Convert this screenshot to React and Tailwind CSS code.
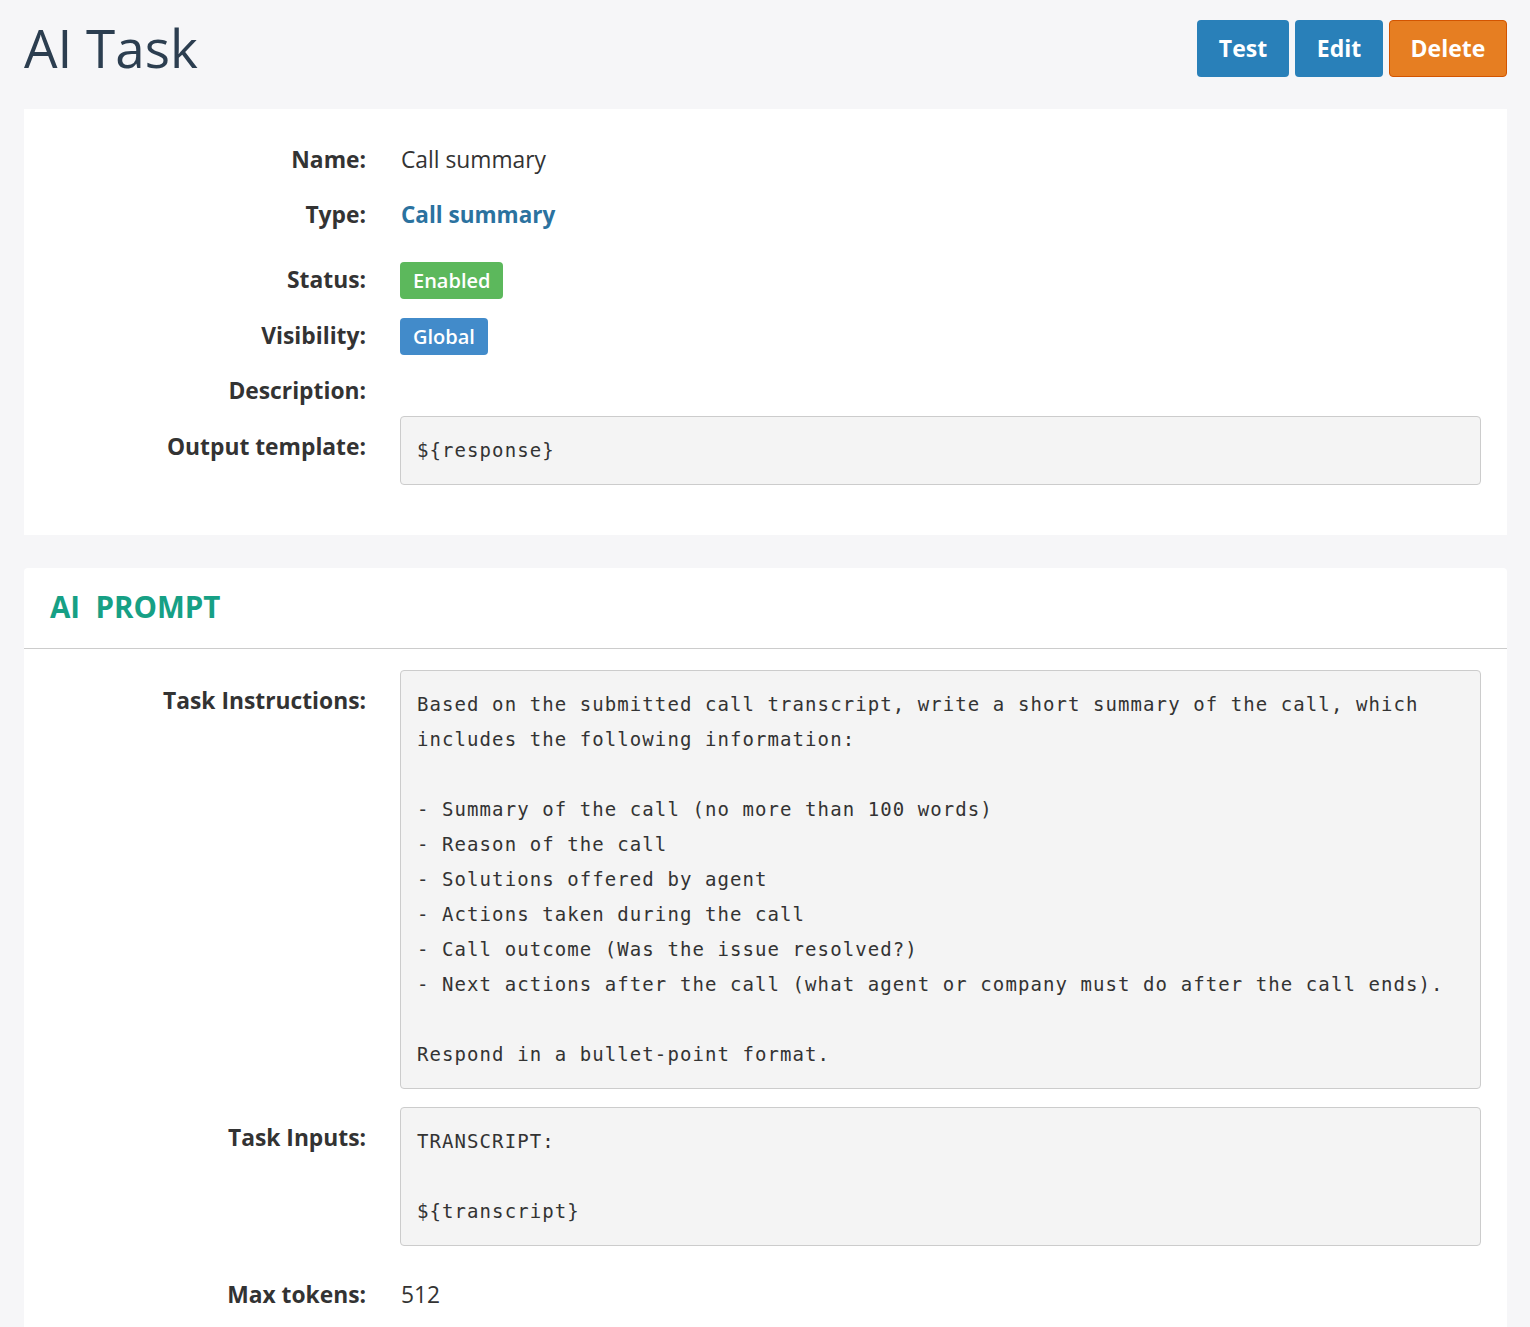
import * as React from 'react';

const sans = { fontFamily: '"Open Sans", "Noto Sans", sans-serif' };

const Label = ({ children, className = '' }) => (
    <div className={`w-[342px] shrink-0 text-right font-bold text-[22.8px] text-[#333333] leading-[34px] ${className}`}>
        {children}
    </div>
);

const Pre = ({ children }) => (
    <pre
        className="flex-1 m-0 bg-[#f4f4f4] border border-[#cccccc] rounded-[4px] px-4 py-[16px] text-[19px] leading-[35px] tracking-[1.08px] text-[#333333] whitespace-pre-wrap"
        style={{ fontFamily: '"DejaVu Sans Mono", "Liberation Mono", monospace' }}
    >
        {children}
    </pre>
);

const instructions = `Based on the submitted call transcript, write a short summary of the call, which
includes the following information:

- Summary of the call (no more than 100 words)
- Reason of the call
- Solutions offered by agent
- Actions taken during the call
- Call outcome (Was the issue resolved?)
- Next actions after the call (what agent or company must do after the call ends).

Respond in a bullet-point format.`;

export default function App() {
    return (
        <div className="min-h-screen bg-[#f6f6f8] pl-6 pr-[23px] pt-[20px] pb-10" style={sans}>
            {/* header */}
            <div className="flex items-start justify-between">
                <h1 className="text-[53px] leading-[56px] font-normal text-[#2c3e50] mt-0">AI Task</h1>
                <div className="flex gap-[6px]">
                    <button className="h-[57px] w-[92px] rounded-[4px] bg-[#2980b9] text-white font-bold text-[23px]">Test</button>
                    <button className="h-[57px] w-[88px] rounded-[4px] bg-[#2980b9] text-white font-bold text-[23px]">Edit</button>
                    <button className="h-[57px] w-[118px] rounded-[4px] bg-[#e67e22] border border-[#d35400] text-white font-bold text-[23px]">Delete</button>
                </div>
            </div>

            {/* details card */}
            <div className="mt-[32px] bg-white pt-[34px] pb-[50px] pr-[26px]">
                <div className="flex gap-[34px]">
                    <Label>Name:</Label>
                    <div className="text-[22.8px] leading-[34px] text-[#333333] pl-[1px]">Call summary</div>
                </div>
                <div className="flex gap-[34px] mt-[21px]">
                    <Label>Type:</Label>
                    <div className="text-[22.5px] leading-[34px] font-bold text-[#2b729f] pl-[1px]">Call summary</div>
                </div>
                <div className="flex gap-[34px] mt-[30px] items-center">
                    <Label className="-mt-[2px]">Status:</Label>
                    <span className="h-[37px] px-[13px] flex items-center rounded-[4px] bg-[#5cb85c] text-white font-semibold text-[20px]">Enabled</span>
                </div>
                <div className="flex gap-[34px] mt-[19px] items-center">
                    <Label className="-mt-[2px]">Visibility:</Label>
                    <span className="h-[37px] px-[13px] flex items-center rounded-[4px] bg-[#428bca] text-white font-semibold text-[20px]">Global</span>
                </div>
                <div className="flex gap-[34px] mt-[19px]">
                    <Label>Description:</Label>
                </div>
                <div className="flex gap-[34px] mt-[8px]">
                    <Label className="pt-[14px]">Output template:</Label>
                    <Pre>{'${response}'}</Pre>
                </div>
            </div>

            {/* prompt card */}
            <div className="mt-[33px] bg-white rounded-t-[4px] pb-10">
                <div className="h-[81px] flex items-center px-[26px] border-b border-[#cccccc]">
                    <h2 className="text-[29.5px] font-bold text-[#16a085] leading-none -mt-[2px]">AI&nbsp; PROMPT</h2>
                </div>
                <div className="pr-[26px] pt-[21px]">
                    <div className="flex gap-[34px]">
                        <Label className="pt-[14px]">Task Instructions:</Label>
                        <Pre>{instructions}</Pre>
                    </div>
                    <div className="flex gap-[34px] mt-[18px]">
                        <Label className="pt-[14px]">Task Inputs:</Label>
                        <Pre>{'TRANSCRIPT:\n\n${transcript}'}</Pre>
                    </div>
                    <div className="flex gap-[34px] mt-[32px]">
                        <Label>Max tokens:</Label>
                        <div className="text-[22.8px] leading-[34px] text-[#333333] pl-[1px]">512</div>
                    </div>
                </div>
            </div>
        </div>
    );
}
